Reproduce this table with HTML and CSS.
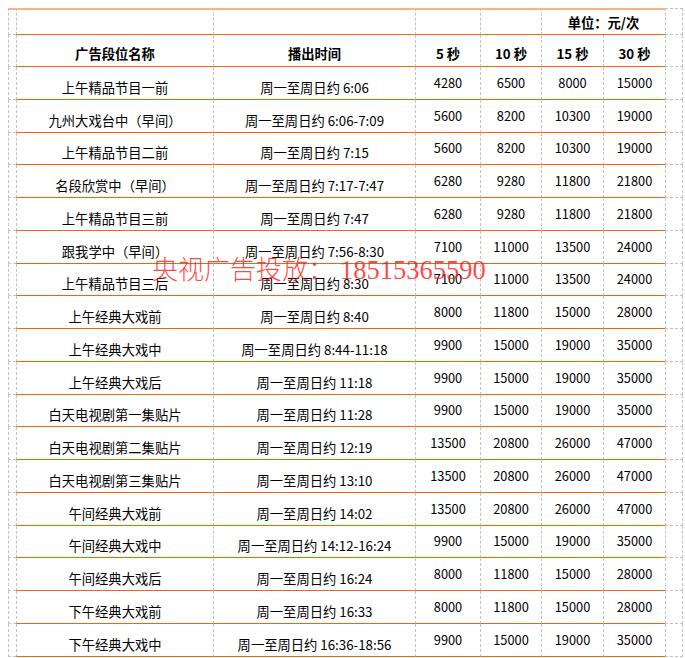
FILE: index.html
```html
<!DOCTYPE html>
<html lang="zh-CN">
<head>
<meta charset="utf-8">
<title>广告价格表</title>
<link rel="stylesheet" href="styles.css">
</head>
<body>
<div class="sheet">
  <div class="grid">
    <div class="s top-l"></div><div class="c top"></div><div class="c top"></div><div class="c top"></div><div class="c top"></div><div class="c top span2 unit">单位：元/次</div><div class="s e top-r"></div>

    <div class="s"></div><div class="c h">广告段位名称</div><div class="c h">播出时间</div><div class="c h">5 秒</div><div class="c h">10 秒</div><div class="c h">15 秒</div><div class="c h">30 秒</div><div class="s e"></div>

    <div class="s"></div><div class="c t">上午精品节目一前</div><div class="c t">周一至周日约 6:06</div><div class="c n">4280</div><div class="c n">6500</div><div class="c n">8000</div><div class="c n">15000</div><div class="s e"></div>
    <div class="s"></div><div class="c t">九州大戏台中（早间）</div><div class="c t">周一至周日约 6:06-7:09</div><div class="c n">5600</div><div class="c n">8200</div><div class="c n">10300</div><div class="c n">19000</div><div class="s e"></div>
    <div class="s"></div><div class="c t">上午精品节目二前</div><div class="c t">周一至周日约 7:15</div><div class="c n">5600</div><div class="c n">8200</div><div class="c n">10300</div><div class="c n">19000</div><div class="s e"></div>
    <div class="s"></div><div class="c t">名段欣赏中（早间）</div><div class="c t">周一至周日约 7:17-7:47</div><div class="c n">6280</div><div class="c n">9280</div><div class="c n">11800</div><div class="c n">21800</div><div class="s e"></div>
    <div class="s"></div><div class="c t">上午精品节目三前</div><div class="c t">周一至周日约 7:47</div><div class="c n">6280</div><div class="c n">9280</div><div class="c n">11800</div><div class="c n">21800</div><div class="s e"></div>
    <div class="s"></div><div class="c t">跟我学中（早间）</div><div class="c t">周一至周日约 7:56-8:30</div><div class="c n">7100</div><div class="c n">11000</div><div class="c n">13500</div><div class="c n">24000</div><div class="s e"></div>
    <div class="s"></div><div class="c t">上午精品节目三后</div><div class="c t">周一至周日约 8:30</div><div class="c n">7100</div><div class="c n">11000</div><div class="c n">13500</div><div class="c n">24000</div><div class="s e"></div>
    <div class="s"></div><div class="c t">上午经典大戏前</div><div class="c t">周一至周日约 8:40</div><div class="c n">8000</div><div class="c n">11800</div><div class="c n">15000</div><div class="c n">28000</div><div class="s e"></div>
    <div class="s"></div><div class="c t">上午经典大戏中</div><div class="c t">周一至周日约 8:44-11:18</div><div class="c n">9900</div><div class="c n">15000</div><div class="c n">19000</div><div class="c n">35000</div><div class="s e"></div>
    <div class="s"></div><div class="c t">上午经典大戏后</div><div class="c t">周一至周日约 11:18</div><div class="c n">9900</div><div class="c n">15000</div><div class="c n">19000</div><div class="c n">35000</div><div class="s e"></div>
    <div class="s"></div><div class="c t">白天电视剧第一集贴片</div><div class="c t">周一至周日约 11:28</div><div class="c n">9900</div><div class="c n">15000</div><div class="c n">19000</div><div class="c n">35000</div><div class="s e"></div>
    <div class="s"></div><div class="c t">白天电视剧第二集贴片</div><div class="c t">周一至周日约 12:19</div><div class="c n">13500</div><div class="c n">20800</div><div class="c n">26000</div><div class="c n">47000</div><div class="s e"></div>
    <div class="s"></div><div class="c t">白天电视剧第三集贴片</div><div class="c t">周一至周日约 13:10</div><div class="c n">13500</div><div class="c n">20800</div><div class="c n">26000</div><div class="c n">47000</div><div class="s e"></div>
    <div class="s"></div><div class="c t">午间经典大戏前</div><div class="c t">周一至周日约 14:02</div><div class="c n">13500</div><div class="c n">20800</div><div class="c n">26000</div><div class="c n">47000</div><div class="s e"></div>
    <div class="s"></div><div class="c t">午间经典大戏中</div><div class="c t">周一至周日约 14:12-16:24</div><div class="c n">9900</div><div class="c n">15000</div><div class="c n">19000</div><div class="c n">35000</div><div class="s e"></div>
    <div class="s"></div><div class="c t">午间经典大戏后</div><div class="c t">周一至周日约 16:24</div><div class="c n">8000</div><div class="c n">11800</div><div class="c n">15000</div><div class="c n">28000</div><div class="s e"></div>
    <div class="s"></div><div class="c t">下午经典大戏前</div><div class="c t">周一至周日约 16:33</div><div class="c n">8000</div><div class="c n">11800</div><div class="c n">15000</div><div class="c n">28000</div><div class="s e"></div>
    <div class="s"></div><div class="c t">下午经典大戏中</div><div class="c t">周一至周日约 16:36-18:56</div><div class="c n">9900</div><div class="c n">15000</div><div class="c n">19000</div><div class="c n">35000</div><div class="s e"></div>
  </div>
  <div class="watermark">央视广告投放：<span class="phone">18515365590</span></div>
</div>
</body>
</html>
```
FILE: styles.css
```css
* { box-sizing: border-box; }
html, body { margin: 0; padding: 0; background: #fff; }
body {
  padding: 8px 0 0 8px;
  font-family: "Noto Sans CJK SC", "Noto Sans", sans-serif;
  color: #000;
  overflow: hidden;
  text-spacing-trim: space-all;
}
.sheet { position: relative; width: 675px; }
.grid {
  display: grid;
  grid-template-columns: 8px 197px 202px 65px 61px 62px 62px 18px;
  grid-template-rows: 27px 32px repeat(18, 32.78px);
}
.grid > div {
  border-left: 1px dashed #c4c4c4;
  display: flex;
  align-items: flex-end;
  justify-content: center;
  white-space: nowrap;
  line-height: 16px;
}
.s { border-bottom: 1px dashed #c4c4c4; }
.s.e { border-right: 1px dashed #c4c4c4; }
.c { border-bottom: 1px solid #e26b0a; }
.top, .top-l { border-top: 2px solid #f5b488; }
.top-l { border-bottom: 1px dashed #c4c4c4; }
.top-r { border-top: 1px dashed #c4c4c4; }
.span2 { grid-column: span 2; }
.unit { font-size: 13.3px; font-weight: bold; padding-bottom: 3px; }
.h { font-size: 13.3px; font-weight: bold; padding-bottom: 4px; }
.t { font-size: 13.3px; padding-bottom: 3px; }
.n { font-size: 12.8px; padding-bottom: 8px; }
.watermark {
  position: absolute;
  left: 144px;
  top: 248px;
  font-family: "Liberation Serif", "Noto Sans CJK SC", serif;
  font-size: 26px;
  line-height: 28px;
  font-weight: 300;
  color: rgba(255, 20, 20, 0.78);
  white-space: nowrap;
  pointer-events: none;
}
.phone { margin-left: 6px; font-size: 26.5px; }
```
